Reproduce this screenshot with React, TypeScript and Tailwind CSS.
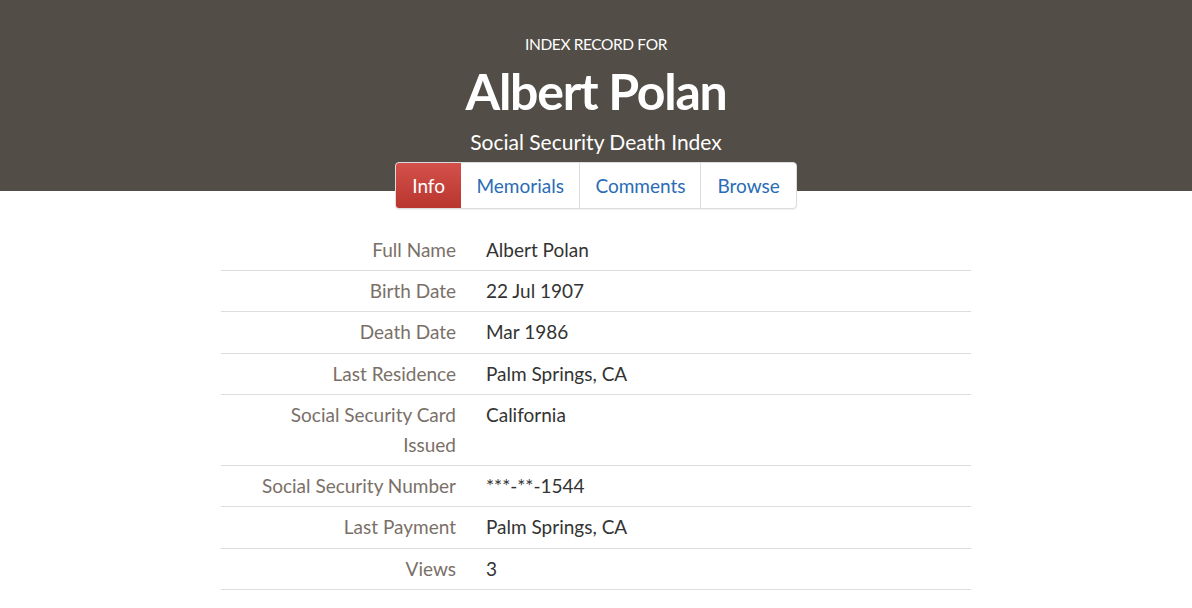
const ROWS: [string, string][] = [
  ["Full Name", "Albert Polan"],
  ["Birth Date", "22 Jul 1907"],
  ["Death Date", "Mar 1986"],
  ["Last Residence", "Palm Springs, CA"],
  ["Social Security Card Issued", "California"],
  ["Social Security Number", "***-**-1544"],
  ["Last Payment", "Palm Springs, CA"],
  ["Views", "3"],
];

const TABS = [
  { label: "Info", pad: "px-4" },
  { label: "Memorials", pad: "px-[15.5px]" },
  { label: "Comments", pad: "px-[15px]" },
  { label: "Browse", pad: "px-4" },
];

function Tabs() {
  return (
    <nav className="relative -mt-[29px] flex justify-center">
      <div className="flex h-[47px] overflow-hidden rounded border border-[#dcdcdc] bg-white shadow-[0_1px_2px_rgba(0,0,0,0.06)]">
        {TABS.map((tab, i) =>
          i === 0 ? (
            <a
              key={tab.label}
              className={`flex items-center bg-gradient-to-b from-[#d4504a] to-[#b9362f] pt-px text-[19px] text-white ${tab.pad}`}
            >
              {tab.label}
            </a>
          ) : (
            <a
              key={tab.label}
              className={`flex items-center pt-px text-[19px] text-[#2a6cb5] ${tab.pad} ${i > 1 ? "border-l border-[#dcdcdc]" : ""}`}
            >
              {tab.label}
            </a>
          ),
        )}
      </div>
    </nav>
  );
}

export default function App() {
  return (
    <main className="min-h-screen bg-white font-['Lato',sans-serif]">
      <header className="h-[191px] bg-[#524d46] pt-[34px] text-center text-white">
        <p className="text-[15.5px] leading-5 tracking-tight">INDEX RECORD FOR</p>
        <h1 className="mt-[7px] text-[50px] font-bold leading-[60px] tracking-tight">
          Albert Polan
        </h1>
        <p className="mt-[7px] text-[21px] leading-7">Social Security Death Index</p>
      </header>
      <Tabs />
      <table className="mx-auto mt-[21px] w-[750px] border-collapse text-[19px]">
        <tbody>
          {ROWS.map(([label, value]) => (
            <tr key={label} className="border-b border-[#dddddd]">
              <th className="w-[250px] py-[5px] pl-[25px] pr-[15px] text-right align-top font-normal leading-[30.2px] text-[#7a7068]">
                {label}
              </th>
              <td className="px-[15px] py-[5px] align-top leading-[30.2px] text-[#333333]">
                {value}
              </td>
            </tr>
          ))}
        </tbody>
      </table>
    </main>
  );
}
